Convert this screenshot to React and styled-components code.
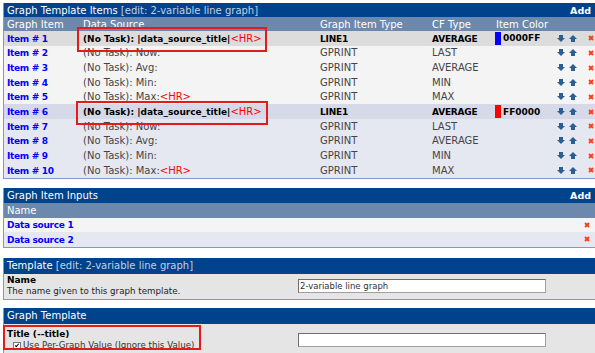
import React from 'react'
import styled, { createGlobalStyle } from 'styled-components'

const Global = createGlobalStyle`
  html, body {
    margin: 0;
    padding: 0;
    background: #fff;
    overflow: hidden;
  }
  body {
    font-family: "DejaVu Sans", Verdana, sans-serif;
    font-size: 10px;
    color: #333;
  }
`

const Page = styled.div`
  position: relative;
  width: 593px;
  padding: 3px 0 0 3px;
`

const Box = styled.div`
  border: 1px solid #7f98c4;
  border-top: none;
  margin-bottom: ${p => p.$gap || 9}px;
`

const Head = styled.div`
  display: flex;
  align-items: center;
  justify-content: space-between;
  height: ${p => p.$h || 14}px;
  padding: 0 4px 0 3px;
  background: #00438c;
  color: #fff;
  font-size: 10px;
  span.sub {
    color: #c4d0e4;
  }
  .add {
    font-weight: bold;
    font-size: 9.5px;
  }
`

const cols = '76px 237px 112px 64px 60px 30px 1fr'

const ColHead = styled.div`
  display: grid;
  grid-template-columns: ${p => p.$cols || '1fr'};
  align-items: center;
  height: ${p => p.$h || 14}px;
  background: #6d88ad;
  color: #fff;
  font-size: 10px;
  & > div {
    padding-left: 3px;
  }
`

const Row = styled.div`
  display: grid;
  grid-template-columns: ${p => p.$cols || '1fr'};
  align-items: center;
  height: ${p => p.$h || 14.67}px;
  background: ${p => p.$bg};
  & > div {
    padding-left: 3px;
    white-space: nowrap;
  }
`

const ItemLink = styled.a`
  color: #0000ff;
  font-weight: bold;
  font-size: 9px;
  letter-spacing: -0.3px;
  text-decoration: none;
`

const Src = styled.span`
  color: ${p => (p.$bold ? '#000' : '#444')};
  font-weight: ${p => (p.$bold ? 'bold' : 'normal')};
  font-size: ${p => (p.$bold ? 9 : 10)}px;
`

const Hr = styled.span`
  color: #ff0000;
  font-weight: normal;
  font-size: 10px;
`

const Strong = styled.span`
  color: ${p => (p.$bold ? '#000' : '#444')};
  font-weight: ${p => (p.$bold ? 'bold' : 'normal')};
  font-size: ${p => (p.$bold ? 9 : 10)}px;
  letter-spacing: ${p => (p.$bold ? '-0.2px' : '0')};
`

const ColorCell = styled.div`
  display: flex;
  align-items: center;
  gap: 2px;
  height: 100%;
  && {
    padding-left: 2px;
  }
  font-weight: bold;
  font-size: 9px;
  color: #000;
`

const Swatch = styled.span`
  display: inline-block;
  width: 6px;
  height: 13px;
  background: ${p => p.$c};
`

const Arrows = styled.div`
  display: flex;
  align-items: center;
  gap: 4px;
  && {
    padding-left: 4px;
  }
`

const Del = styled.div`
  display: flex;
  align-items: center;
  && {
    padding-left: ${p => p.$pl ?? 5}px;
  }
`

const FormRow = styled.div`
  display: grid;
  grid-template-columns: 294px 1fr;
  align-items: center;
  height: ${p => p.$h}px;
  padding-top: ${p => p.$pt || 0}px;
  box-sizing: border-box;
  background: #e5e5e5;
  & > div:first-child {
    padding-left: 3px;
  }
`

const Label = styled.div`
  font-weight: bold;
  color: #000;
  font-size: 9px;
  line-height: 11px;
`

const Desc = styled.div`
  color: #222;
  font-size: 8.7px;
  line-height: 11px;
`

const Check = styled.label`
  display: flex;
  align-items: center;
  gap: 2px;
  padding-left: 6px;
  color: #333;
  font-size: 8.7px;
  line-height: 11px;
`

const Tick = styled.span`
  display: inline-block;
  box-sizing: border-box;
  width: 8px;
  height: 8px;
  border: 1px solid #777;
  background: #fff;
  position: relative;
  &::after {
    content: "";
    position: absolute;
    left: 2px;
    top: 0px;
    width: 1px;
    height: 3px;
    border: solid #000;
    border-width: 0 1.5px 1.5px 0;
    transform: rotate(40deg);
  }
`

const Field = styled.input`
  box-sizing: border-box;
  width: 248px;
  height: 14px;
  padding: 0 1px;
  border: 1px solid #a0a0a0;
  border-top-color: #6e6e6e;
  border-left-color: #6e6e6e;
  background: #fff;
  font-family: "DejaVu Sans", Verdana, sans-serif;
  font-size: 8.5px;
  color: #333;
  outline: none;
`

const Mark = styled.div`
  position: absolute;
  left: ${p => p.$x}px;
  top: ${p => p.$y}px;
  width: ${p => p.$w}px;
  height: ${p => p.$h}px;
  border: 2px solid #e41b1b;
  box-sizing: border-box;
  pointer-events: none;
`

const Down = () => (
  <svg width="8" height="7" viewBox="0 0 8 7">
    <polygon points="2,0 6,0 6,3 8,3 4,7 0,3 2,3" fill="#2b5f94" />
  </svg>
)

const Up = () => (
  <svg width="8" height="7" viewBox="0 0 8 7">
    <polygon points="4,0 8,4 6,4 6,7 2,7 2,4 0,4" fill="#2b5f94" />
  </svg>
)

const X = () => (
  <svg width="6" height="6" viewBox="0 0 6 6">
    <path d="M1 1 L5 5 M5 1 L1 5" stroke="#ff3b12" strokeWidth="1.8" />
  </svg>
)

const items = [
  { n: 1, type: 'LINE1', cf: 'AVERAGE', color: '0000FF', hex: '#0000ff', bold: true },
  { n: 2, src: 'Now:', type: 'GPRINT', cf: 'LAST' },
  { n: 3, src: 'Avg:', type: 'GPRINT', cf: 'AVERAGE' },
  { n: 4, src: 'Min:', type: 'GPRINT', cf: 'MIN' },
  { n: 5, src: 'Max:', type: 'GPRINT', cf: 'MAX', hr: true },
  { n: 6, type: 'LINE1', cf: 'AVERAGE', color: 'FF0000', hex: '#ff0000', bold: true },
  { n: 7, src: 'Now:', type: 'GPRINT', cf: 'LAST' },
  { n: 8, src: 'Avg:', type: 'GPRINT', cf: 'AVERAGE' },
  { n: 9, src: 'Min:', type: 'GPRINT', cf: 'MIN' },
  { n: 10, src: 'Max:', type: 'GPRINT', cf: 'MAX', hr: true },
]

function rowBg(it) {
  const second = it.n > 5
  if (it.bold) return second ? '#d6d9e7' : '#dcdcdc'
  return second ? '#e6e8f1' : '#f4f4f4'
}

export default function App() {
  return (
    <Page>
      <Global />

      <Box>
        <Head>
          <div>Graph Template Items <span className="sub">[edit: 2-variable line graph]</span></div>
          <span className="add">Add</span>
        </Head>
        <ColHead $cols={cols}>
          <div>Graph Item</div>
          <div>Data Source</div>
          <div>Graph Item Type</div>
          <div>CF Type</div>
          <div>Item Color</div>
          <div />
          <div />
        </ColHead>
        {items.map(it => (
          <Row key={it.n} $cols={cols} $bg={rowBg(it)}>
            <div><ItemLink href="#">Item # {it.n}</ItemLink></div>
            <div>
              {it.bold ? (
                <Src $bold>(No Task): |data_source_title|<Hr>&lt;HR&gt;</Hr></Src>
              ) : (
                <Src>(No Task): {it.src}{it.hr && <Hr>&lt;HR&gt;</Hr>}</Src>
              )}
            </div>
            <div><Strong $bold={it.bold}>{it.type}</Strong></div>
            <div><Strong $bold={it.bold}>{it.cf}</Strong></div>
            {it.color ? (
              <ColorCell><Swatch $c={it.hex} />{it.color}</ColorCell>
            ) : <div />}
            <Arrows><Down /><Up /></Arrows>
            <Del><X /></Del>
          </Row>
        ))}
      </Box>

      <Box $gap={10}>
        <Head $h={15}>
          <div>Graph Item Inputs</div>
          <span className="add">Add</span>
        </Head>
        <ColHead $cols="1fr 11px" $h={15}>
          <div>Name</div>
          <div />
        </ColHead>
        {['Data source 1', 'Data source 2'].map((n, i) => (
          <Row key={n} $cols="1fr 11px" $h={14.5} $bg={i ? '#e6e8f1' : '#f4f4f4'}>
            <div><ItemLink href="#">{n}</ItemLink></div>
            <Del $pl={0}><X /></Del>
          </Row>
        ))}
      </Box>

      <Box $gap={8}>
        <Head $h={16}>
          <div>Template <span className="sub">[edit: 2-variable line graph]</span></div>
        </Head>
        <FormRow $h={25}>
          <div>
            <Label>Name</Label>
            <Desc>The name given to this graph template.</Desc>
          </div>
          <div><Field defaultValue="2-variable line graph" /></div>
        </FormRow>
      </Box>

      <Box>
        <Head $h={16}>
          <div>Graph Template</div>
        </Head>
        <FormRow $h={30} $pt={3}>
          <div>
            <Label>Title (--title)</Label>
            <Check><Tick />Use Per-Graph Value (Ignore this Value)</Check>
          </div>
          <div><Field defaultValue="" /></div>
        </FormRow>
      </Box>

      <Mark $x={77} $y={27} $w={190} $h={25} />
      <Mark $x={76} $y={101} $w={192} $h={24} />
      <Mark $x={3} $y={325} $w={198} $h={25} />
    </Page>
  )
}
